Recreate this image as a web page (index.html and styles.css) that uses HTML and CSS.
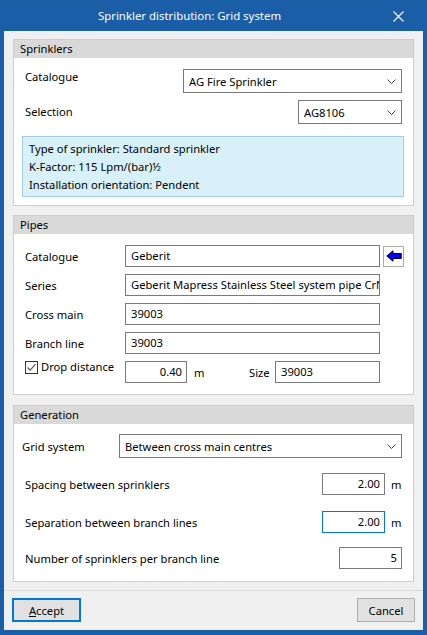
FILE: index.html
```html
<!DOCTYPE html>
<html>
<head>
<meta charset="utf-8">
<link rel="stylesheet" href="styles.css">
</head>
<body>
<div class="window">
  <div class="titlebar">
    <div class="title">Sprinkler distribution: Grid system</div>
    <div class="close">
      <svg width="11" height="11" viewBox="0 0 11 11"><path d="M0.5 0.5 L10.5 10.5 M10.5 0.5 L0.5 10.5" stroke="#fff" stroke-width="1.1" fill="none"/></svg>
    </div>
  </div>
  <div class="client">
    <div class="content">
      <section class="group">
        <div class="group-head">Sprinklers</div>
        <div class="group-body spr-body">
          <div class="row row-top">
            <span class="label label-up">Catalogue</span>
            <div class="select sel-cat"><span class="sel-text">AG Fire Sprinkler</span><svg class="chev" width="9" height="5" viewBox="0 0 9 5"><path d="M0.5 0.5 L4.5 4.5 L8.5 0.5" stroke="#444" fill="none"/></svg></div>
          </div>
          <div class="row row-sel">
            <span class="label">Selection</span>
            <div class="select sel-model"><span class="sel-text">AG8106</span><svg class="chev" width="9" height="5" viewBox="0 0 9 5"><path d="M0.5 0.5 L4.5 4.5 L8.5 0.5" stroke="#444" fill="none"/></svg></div>
          </div>
          <div class="info">
            <div>Type of sprinkler: Standard sprinkler</div>
            <div>K-Factor: 115 Lpm/(bar)½</div>
            <div>Installation orientation: Pendent</div>
          </div>
        </div>
      </section>

      <section class="group group-pipes">
        <div class="group-head">Pipes</div>
        <div class="group-body pipes-body">
          <div class="prow">
            <span class="plabel">Catalogue</span>
            <div class="field pfield">Geberit</div>
            <div class="arrow-btn">
              <svg width="16" height="12" viewBox="0 0 16 12"><path d="M0.8 6 L7 0.8 L7 3.5 L15.2 3.5 L15.2 8.5 L7 8.5 L7 11.2 Z" fill="#0000ff" stroke="#000" stroke-width="1" stroke-linejoin="miter"/></svg>
            </div>
          </div>
          <div class="prow">
            <span class="plabel">Series</span>
            <div class="field pfield">Geberit Mapress Stainless Steel system pipe CrN</div>
          </div>
          <div class="prow">
            <span class="plabel">Cross main</span>
            <div class="field pfield">39003</div>
          </div>
          <div class="prow">
            <span class="plabel">Branch line</span>
            <div class="field pfield">39003</div>
          </div>
          <div class="prow">
            <span class="plabel check-label">
              <span class="checkbox"><svg width="11" height="11" viewBox="0 0 11 11"><path d="M1.5 5.5 L4.2 8.2 L9.5 2.2" stroke="#555" stroke-width="1.2" fill="none"/></svg></span>
              Drop distance
            </span>
            <div class="field num drop">0.40</div>
            <span class="unit unit-drop">m</span>
            <span class="size-label">Size</span>
            <div class="field size">39003</div>
          </div>
        </div>
      </section>

      <section class="group group-gen">
        <div class="group-head">Generation</div>
        <div class="group-body gen-body">
          <div class="grow grow-grid">
            <span class="glabel-grid">Grid system</span>
            <div class="select sel-grid"><span class="sel-text">Between cross main centres</span><svg class="chev" width="9" height="5" viewBox="0 0 9 5"><path d="M0.5 0.5 L4.5 4.5 L8.5 0.5" stroke="#444" fill="none"/></svg></div>
          </div>
          <div class="grow g-spacing">
            <span class="glabel">Spacing between sprinklers</span>
            <div class="field num gnum">2.00</div>
            <span class="unit gunit">m</span>
          </div>
          <div class="grow g-sep">
            <span class="glabel">Separation between branch lines</span>
            <div class="field num gnum focused">2.00</div>
            <span class="unit gunit">m</span>
          </div>
          <div class="grow g-count">
            <span class="glabel">Number of sprinklers per branch line</span>
            <div class="field num gnum">5</div>
          </div>
        </div>
      </section>
    </div>
    <div class="footer">
      <div class="btn btn-default"><u>A</u>ccept</div>
      <div class="btn btn-cancel">Cancel</div>
    </div>
  </div>
</div>
</body>
</html>
```

FILE: styles.css
```css
* { box-sizing: border-box; }
html, body { margin: 0; padding: 0; }
body {
  font-family: "Noto Sans", "Open Sans", sans-serif;
  font-size: 11.2px;
  color: #000;
  background: #fff;
}
.window {
  width: 427px;
  height: 635px;
  background: #1a5ea8;
  display: flex;
  flex-direction: column;
}
.titlebar {
  height: 31px;
  display: flex;
  align-items: center;
  padding: 0 6px 0 4px;
  color: #fff;
}
.title {
  flex: 1;
  text-align: center;
  font-size: 11.4px;
  line-height: 16px;
  padding-top: 1px;
}
.close {
  width: 46px;
  height: 31px;
  display: flex;
  align-items: center;
  justify-content: center;
  padding-top: 2px;
}
.client {
  flex: 1;
  margin: 0 4px 5px;
  background: #f0f0f0;
  display: flex;
  flex-direction: column;
}
.content {
  padding: 8px 9px 0;
}
.group {
  border: 1px solid #cdcdcd;
  background: #fff;
}
.group-pipes { margin-top: 9px; }
.group-gen { margin-top: 10px; }
.group-head {
  height: 18px;
  line-height: 18px;
  background: #d9d9d9;
  padding-left: 6px;
}
.group-body {
  display: flex;
  flex-direction: column;
}
/* Sprinklers */
.spr-body { padding: 11px 11px 8px 11px; }
.row {
  display: flex;
  justify-content: space-between;
  align-items: center;
}
.row-top { align-items: flex-start; }
.row-sel { margin-top: 7px; }
.label { line-height: 16px; }
.label-up { margin-top: 0; }
.select {
  height: 24px;
  border: 1px solid #7a7a7a;
  background: #fff;
  display: flex;
  align-items: center;
  padding: 0 5px 0 5px;
}
.sel-text { flex: 1; white-space: nowrap; overflow: hidden; }
.chev { flex: none; }
.sel-cat { width: 219px; }
.sel-model { width: 104px; }
.info {
  margin: 12px -2px 0 -3px;
  border: 1px solid #a3cfdd;
  background: #d8f0f8;
  padding: 3px 6px 2px;
  line-height: 18px;
}
/* Pipes */
.pipes-body { padding: 11px 0 11px 11px; }
.prow {
  display: flex;
  align-items: center;
  height: 22px;
}
.prow + .prow { margin-top: 7px; }
.plabel { width: 100px; flex: none; }
.field {
  height: 22px;
  border: 1px solid #7a7a7a;
  background: #fff;
  line-height: 20px;
  padding: 0 5px;
  white-space: nowrap;
  overflow: hidden;
}
.pfield { width: 255px; }
.arrow-btn {
  width: 21px;
  height: 21px;
  margin-left: 3px;
  border: 1px solid #adadad;
  background: #fdfdfd;
  display: flex;
  align-items: center;
  justify-content: center;
}
.check-label {
  display: flex;
  align-items: center;
  align-self: flex-start;
  margin-top: -2px;
  line-height: 16px;
}
.checkbox {
  width: 13px;
  height: 13px;
  border: 1px solid #333;
  background: #fff;
  display: flex;
  align-items: center;
  justify-content: center;
  margin-right: 3px;
}
.num { text-align: right; padding: 0 4px; }
.drop { width: 62px; }
.unit-drop { width: 62px; padding-left: 7px; }
.size-label { width: 26px; }
.size { width: 105px; }
/* Generation */
.gen-body { padding: 10px 11px 12px 8px; }
.grow {
  display: flex;
  align-items: center;
}
.grow-grid { justify-content: space-between; }
.sel-grid { width: 283px; }
.glabel { flex: 1; padding-left: 3px; }
.gnum { width: 63px; height: 22px; }
.gunit { width: 17px; padding-left: 6px; }
.g-spacing { margin-top: 15px; }
.g-sep { margin-top: 16px; }
.g-count { margin-top: 14px; }
.focused { border-color: #0078d7; }
/* Footer */
.footer {
  margin-top: 8px;
  border-top: 1px solid #dadada;
  padding: 7px 8px 8px;
  display: flex;
  justify-content: space-between;
}
.btn {
  height: 24px;
  background: #e1e1e1;
  border: 1px solid #adadad;
  display: flex;
  align-items: center;
  justify-content: center;
}
.btn-default { width: 69px; border: 2px solid #0078d7; }
.btn-cancel { width: 58px; }
```
